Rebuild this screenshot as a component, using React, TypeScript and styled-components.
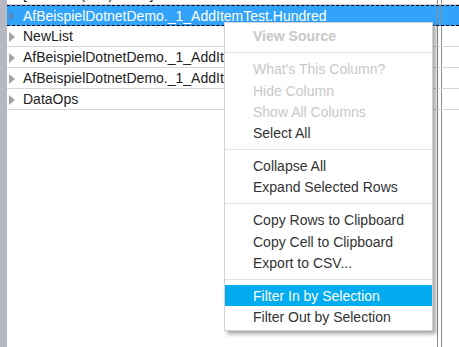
import React from "react";
import styled, { createGlobalStyle, css } from "styled-components";

const GlobalStyle = createGlobalStyle`
  html, body { margin: 0; padding: 0; background: #ffffff; }
  body {
    font-family: "Liberation Sans", Arial, sans-serif;
    font-size: 14px;
    overflow: hidden;
  }
`;

const Page = styled.div`
  position: relative;
  display: flex;
  width: 459px;
  height: 347px;
  overflow: hidden;
  background: #ffffff;
`;

const SideBar = styled.div`
  width: 7px;
  flex: 0 0 7px;
  background: #b5b8c0;
`;

const Grid = styled.div`
  flex: 1;
  display: flex;
  flex-direction: column;
  margin-top: -16px;
`;

const columns = css`
  display: grid;
  grid-template-columns: 431px 4px 1fr;
`;

const Row = styled.div<{ $selected?: boolean }>`
  ${columns};
  box-sizing: border-box;
  height: 21px;
  flex: 0 0 21px;
  border-bottom: 1px solid #d6d6d6;
  color: #222222;
  ${(p) =>
    p.$selected &&
    css`
      background: #31a3fb;
      color: #ffffff;
      border-top: 1px dashed #000000;
      border-bottom: 1px dashed #000000;
    `}
`;

const Filler = styled.div`
  ${columns};
  flex: 1;
`;

const Cell = styled.div<{ $divider?: boolean }>`
  box-sizing: border-box;
  display: flex;
  align-items: center;
  overflow: hidden;
  white-space: nowrap;
  ${(p) => p.$divider && css`border-right: 1px solid #8e8e8e;`}
`;

const TreeCell = styled(Cell)`
  padding-left: 2px;
  gap: 8px;
`;

const Expander = styled.span<{ $selected?: boolean }>`
  width: 0;
  height: 0;
  flex: 0 0 auto;
  margin-top: 1px;
  border-left: 6px solid ${(p) => (p.$selected ? "#5f87b8" : "#a3a3a3")};
  border-top: 5px solid transparent;
  border-bottom: 5px solid transparent;
`;

const Spacer = styled.span`
  width: 6px;
  flex: 0 0 6px;
`;

const Label = styled.span`
  line-height: 21px;
  padding-top: 1px;
`;

const Menu = styled.div`
  position: absolute;
  left: 224px;
  top: 22px;
  width: 209px;
  box-sizing: border-box;
  padding: 2.3px 0 2px;
  background: #ffffff;
  border: 1px solid #d2d2d2;
  box-shadow: 3px 3px 4px rgba(0, 0, 0, 0.35);
  display: flex;
  flex-direction: column;
`;

const MenuItem = styled.div<{ $disabled?: boolean; $bold?: boolean; $active?: boolean }>`
  box-sizing: border-box;
  height: 21.33px;
  line-height: 21.33px;
  padding: 1px 0 0 28px;
  overflow: visible;
  color: #333333;
  white-space: nowrap;
  ${(p) => p.$disabled && css`color: #c8c8c8;`}
  ${(p) => p.$bold && css`font-weight: bold;`}
  ${(p) =>
    p.$active &&
    css`
      background: #02acef;
      color: #ffffff;
    `}
`;

const Separator = styled.div`
  height: 1px;
  margin: 5.3px 0;
  background: #e4e4e4;
`;

type TreeRow = { label: string; selected?: boolean; expander?: boolean };

const rows: TreeRow[] = [
  { label: "[Klassen (Alle) Tests]", expander: false },
  { label: "AfBeispielDotnetDemo._1_AddItemTest.Hundred", selected: true, expander: true },
  { label: "NewList", expander: true },
  { label: "AfBeispielDotnetDemo._1_AddItemTest.Ten", expander: true },
  { label: "AfBeispielDotnetDemo._1_AddItemTest.One", expander: true },
  { label: "DataOps", expander: true },
];

type Item =
  | { kind: "sep" }
  | { kind: "item"; label: string; disabled?: boolean; bold?: boolean; active?: boolean };

const menu: Item[] = [
  { kind: "item", label: "View Source", disabled: true, bold: true },
  { kind: "sep" },
  { kind: "item", label: "What's This Column?", disabled: true },
  { kind: "item", label: "Hide Column", disabled: true },
  { kind: "item", label: "Show All Columns", disabled: true },
  { kind: "item", label: "Select All" },
  { kind: "sep" },
  { kind: "item", label: "Collapse All" },
  { kind: "item", label: "Expand Selected Rows" },
  { kind: "sep" },
  { kind: "item", label: "Copy Rows to Clipboard" },
  { kind: "item", label: "Copy Cell to Clipboard" },
  { kind: "item", label: "Export to CSV..." },
  { kind: "sep" },
  { kind: "item", label: "Filter In by Selection", active: true },
  { kind: "item", label: "Filter Out by Selection" },
];

export default function App() {
  return (
    <>
      <GlobalStyle />
      <Page>
        <SideBar />
        <Grid>
          {rows.map((r, i) => (
            <Row key={i} $selected={r.selected}>
              <TreeCell $divider>
                {r.expander ? <Expander $selected={r.selected} /> : <Spacer />}
                <Label>{r.label}</Label>
              </TreeCell>
              <Cell $divider />
              <Cell />
            </Row>
          ))}
          <Filler>
            <Cell $divider />
            <Cell $divider />
            <Cell />
          </Filler>
        </Grid>
        <Menu>
          {menu.map((m, i) =>
            m.kind === "sep" ? (
              <Separator key={i} />
            ) : (
              <MenuItem key={i} $disabled={m.disabled} $bold={m.bold} $active={m.active}>
                {m.label}
              </MenuItem>
            )
          )}
        </Menu>
      </Page>
    </>
  );
}
